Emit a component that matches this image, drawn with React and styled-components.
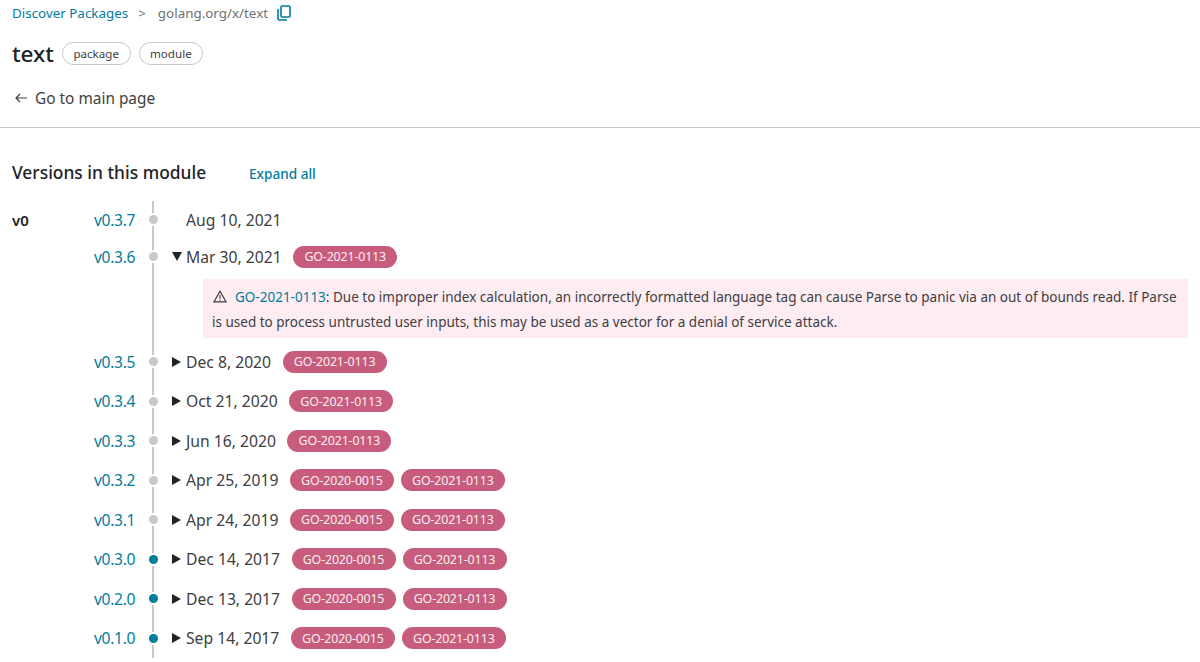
import styled, { createGlobalStyle } from "styled-components";

const GlobalStyle = createGlobalStyle`
	html, body {
		margin: 0;
		height: 662px;
		overflow: hidden;
		background: #fff;
		font-family: "Noto Sans", "Open Sans", sans-serif;
		color: #3e4042;
	}
	a {
		color: #007d9c;
		text-decoration: none;
	}
`;

const Header = styled.header`
	height: 127px;
	padding: 0 12px;
	border-bottom: 1px solid #c6c8ca;
`;

const Crumbs = styled.div`
	display: flex;
	align-items: center;
	height: 25px;
	font-size: 13.4px;
	color: #6e7072;
`;

const Separator = styled.span`
	margin: 0 12px 0 10px;
`;

const CopyIcon = styled.svg`
	margin-left: 9px;
	color: #007d9c;
`;

const TitleRow = styled.div`
	display: flex;
	align-items: center;
	gap: 8px;
	height: 34px;
	margin-top: 11px;
`;

const Title = styled.h1`
	margin: 0;
	font-size: 22.5px;
	font-weight: 500;
	color: #202224;
`;

const Tag = styled.span`
	display: flex;
	align-items: center;
	height: 21px;
	padding: 0 10.5px;
	border: 1px solid #c6c8ca;
	border-radius: 12px;
	font-size: 11.6px;
`;

const BackLink = styled.div`
	display: flex;
	align-items: center;
	gap: 7px;
	margin: 16px 0 0 2px;
	height: 24px;
	font-size: 15.4px;
`;

const Main = styled.main`
	padding: 0 12px;
`;

const SectionHead = styled.div`
	display: flex;
	align-items: center;
	height: 30px;
	margin-top: 29px;
`;

const Heading = styled.h2`
	margin: 0;
	width: 237px;
	font-size: 17.4px;
	font-weight: 500;
	color: #202224;
`;

const ExpandAll = styled.a`
	margin-top: 2px;
	font-size: 13.6px;
	font-weight: 500;
`;

const Versions = styled.div`
	position: relative;
	margin-top: 14px;
	height: 460px;
	&::before {
		content: "";
		position: absolute;
		left: 140px;
		top: 0;
		bottom: 3px;
		width: 2px;
		background: #c6c8ca;
	}
`;

const Row = styled.div`
	position: relative;
	display: flex;
	align-items: center;
	height: ${p => p.$height}px;
	font-size: 15.7px;
`;

const Major = styled.span`
	width: 82px;
	font-size: 15px;
	font-weight: 600;
	color: #202224;
`;

const VersionLink = styled.a`
	width: 54px;
	font-size: 15.6px;
	letter-spacing: -0.3px;
`;

const Dot = styled.span`
	width: 9px;
	height: 9px;
	margin-left: 1px;
	border-radius: 50%;
	background: ${p => (p.$tagged ? "#007d9c" : "#c6c8ca")};
	box-shadow: 0 0 0 2px #fff;
`;

const Arrow = styled.span`
	width: 0;
	height: 0;
	margin-left: 14px;
	${p => p.$open
		? `border-left: 5px solid transparent;
		border-right: 5px solid transparent;
		border-top: 9px solid #202224;`
		: `border-top: 5px solid transparent;
		border-bottom: 5px solid transparent;
		border-left: 9px solid #202224;
		margin-right: 1px;`}
`;

const Spacer = styled.span`
	width: 24px;
`;

const DateText = styled.span`
	margin-left: 4px;
	margin-right: 11.5px;
`;

const Badges = styled.span`
	display: flex;
	gap: 7px;
`;

const Badge = styled.span`
	display: flex;
	align-items: center;
	justify-content: center;
	width: 104px;
	height: 22px;
	border-radius: 12px;
	background: #c75c7c;
	color: #fbeef2;
	font-size: 12.4px;
	letter-spacing: -0.15px;
`;

const Note = styled.div`
	box-sizing: border-box;
	width: 985px;
	height: 59px;
	margin: 4px 0 4px 191px;
	padding: 6px 6px 0 9px;
	background: #fdecf1;
	font-size: 13.5px;
	line-height: 25px;
`;

const WarnIcon = styled.svg`
	vertical-align: -1px;
	margin: 0 8px 0 1px;
`;

const rows = [
	{ version: "v0.3.7", date: "Aug 10, 2021", ids: [], h: 37 },
	{ version: "v0.3.6", date: "Mar 30, 2021", ids: ["GO-2021-0113"], open: true, h: 37 },
	{ version: "v0.3.5", date: "Dec 8, 2020", ids: ["GO-2021-0113"], h: 39.5 },
	{ version: "v0.3.4", date: "Oct 21, 2020", ids: ["GO-2021-0113"], h: 39.5 },
	{ version: "v0.3.3", date: "Jun 16, 2020", ids: ["GO-2021-0113"], h: 39.5 },
	{ version: "v0.3.2", date: "Apr 25, 2019", ids: ["GO-2020-0015", "GO-2021-0113"], h: 39.5 },
	{ version: "v0.3.1", date: "Apr 24, 2019", ids: ["GO-2020-0015", "GO-2021-0113"], h: 39.5 },
	{ version: "v0.3.0", date: "Dec 14, 2017", ids: ["GO-2020-0015", "GO-2021-0113"], tagged: true, h: 39.5 },
	{ version: "v0.2.0", date: "Dec 13, 2017", ids: ["GO-2020-0015", "GO-2021-0113"], tagged: true, h: 39.5 },
	{ version: "v0.1.0", date: "Sep 14, 2017", ids: ["GO-2020-0015", "GO-2021-0113"], tagged: true, h: 39.5 },
];

const App = () =>
{
	return (
		<>
			<GlobalStyle />
			<Header>
				<Crumbs>
					<a href="#">Discover Packages</a>
					<Separator>&gt;</Separator>
					<span>golang.org/x/text</span>
					<CopyIcon width="14" height="16" viewBox="0 0 14 16" fill="none" stroke="currentColor" strokeWidth="1.6">
						<rect x="4" y="1" width="9" height="11" rx="1" />
						<path d="M1 4v10a1 1 0 0 0 1 1h8" />
					</CopyIcon>
				</Crumbs>
				<TitleRow>
					<Title>text</Title>
					<Tag>package</Tag>
					<Tag>module</Tag>
				</TitleRow>
				<BackLink>
					<svg width="14" height="12" viewBox="0 0 14 12" fill="none" stroke="#3e4042" strokeWidth="1.2">
						<path d="M13 6H2M6 2 2 6l4 4" />
					</svg>
					Go to main page
				</BackLink>
			</Header>
			<Main>
				<SectionHead>
					<Heading>Versions in this module</Heading>
					<ExpandAll href="#">Expand all</ExpandAll>
				</SectionHead>
				<Versions>
					{rows.map((row, i) => (
						<div key={row.version}>
							<Row $height={row.h}>
								<Major>{i === 0 ? "v0" : ""}</Major>
								<VersionLink href="#">{row.version}</VersionLink>
								<Dot $tagged={row.tagged} />
								{row.ids.length ? <Arrow $open={row.open} /> : <Spacer />}
								<DateText>{row.date}</DateText>
								<Badges>
									{row.ids.map(id => <Badge key={id}>{id}</Badge>)}
								</Badges>
							</Row>
							{row.open && (
								<Note>
									<WarnIcon width="14" height="13" viewBox="0 0 14 13" fill="none" stroke="#3e4042" strokeWidth="1.2">
										<path d="M7 1.2 1 11.8h12Z" />
										<path d="M7 5v3.5M7 9.5v1" />
									</WarnIcon>
									<a href="#">GO-2021-0113</a>: Due to improper index calculation, an incorrectly formatted language tag can cause Parse to panic via an out of bounds read. If Parse is used to process untrusted user inputs, this may be used as a vector for a denial of service attack.
								</Note>
							)}
						</div>
					))}
				</Versions>
			</Main>
		</>
	);
};

export default App;
